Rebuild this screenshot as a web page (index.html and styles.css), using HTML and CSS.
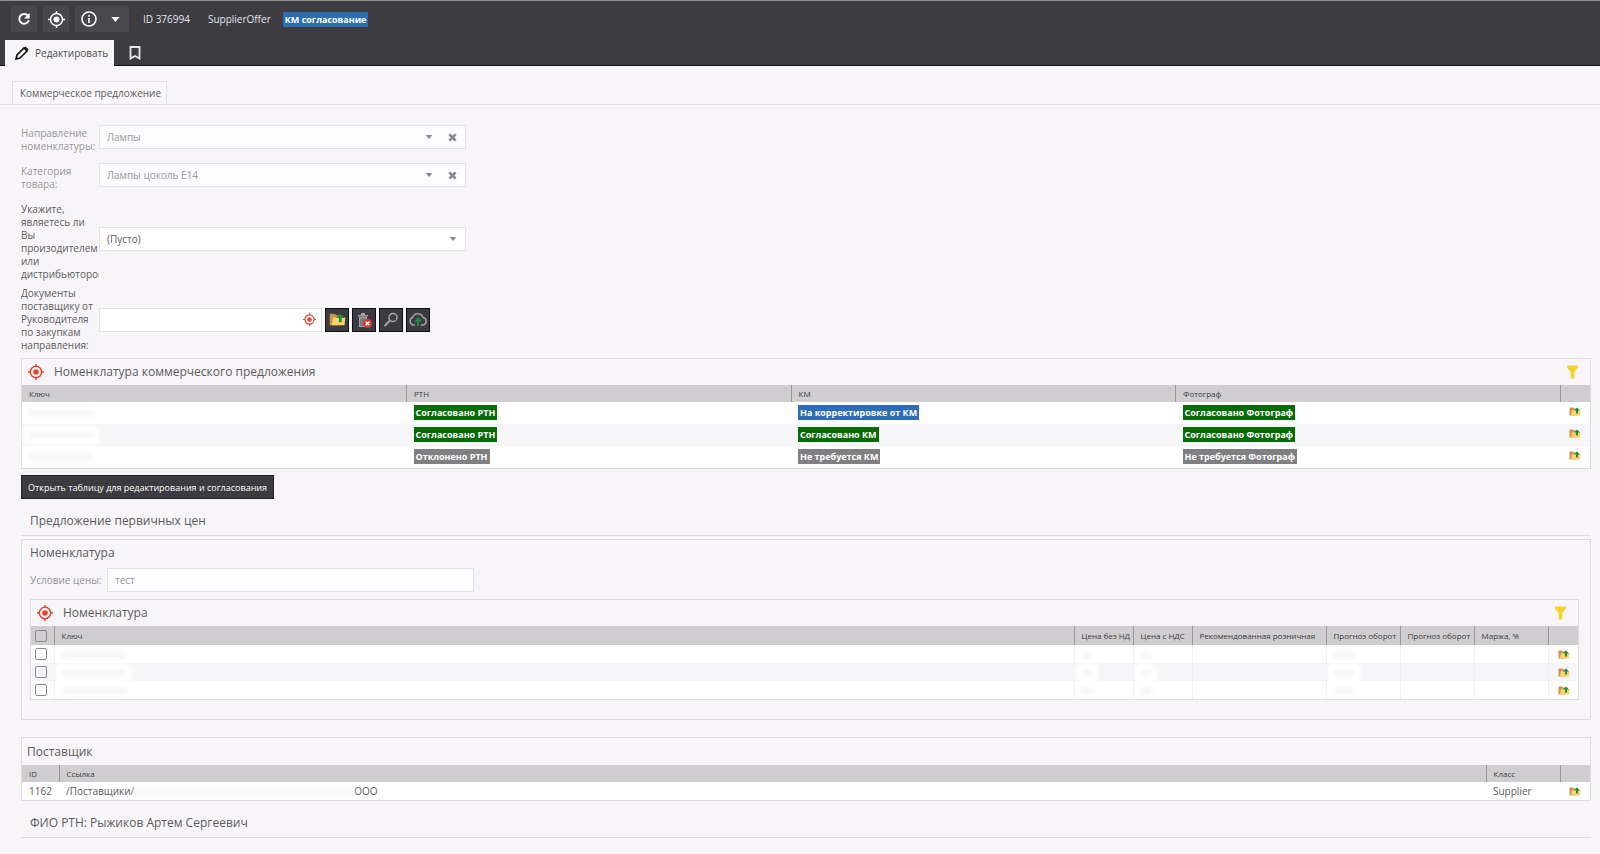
FILE: index.html
```html
<!DOCTYPE html>
<html lang="ru">
<head>
  <meta charset="UTF-8" />
  <meta name="viewport" content="width=device-width, initial-scale=1" />
  <title>SupplierOffer 376994</title>
  <link rel="stylesheet" href="styles.css">
</head>
<body>

  <!-- shared icons -->
  <svg class="sprite" aria-hidden="true">
    <symbol id="i-target" viewBox="0 0 24 24">
      <circle cx="12" cy="12" r="8.500" fill="none" stroke="currentColor" stroke-width="2.200" />
      <circle cx="12" cy="12" r="4.200" fill="currentColor" />
      <path d="M12 0v4M12 20v4M0 12h4M20 12h4" stroke="currentColor" stroke-width="2.200" />
    </symbol>
    <symbol id="i-caret" viewBox="0 0 10 6"><path d="M0 0h10L5 6z" fill="currentColor" /></symbol>
    <symbol id="i-cross" viewBox="0 0 10 10"><path d="M1.500 1.500l7 7M8.500 1.500l-7 7" stroke="currentColor" stroke-width="3" /></symbol>
    <symbol id="i-folder" viewBox="0 0 24 18">
      <path d="M1 17V2l1-1h6l2 2h6v14z" fill="#c9954f" />
      <path d="M4 17L6 6h17l-1 11z" fill="#fbd467" />
      <path d="M16 1l6 6h-4v6h-4V7h-4z" fill="#1f8a45" />
    </symbol>
    <symbol id="i-filter" viewBox="0 0 12 14"><path d="M0 0h12v2L8 7v7H4V7L0 2z" fill="#f5d327" /></symbol>
  </svg>

  <header class="top">
    <div class="toolbar">
      <button class="tool" type="button" aria-label="Обновить">
        <svg width="14" height="14" viewBox="0 0 16 16"><path d="M12.500 4.200A5.600 5.600 0 1 0 13.500 9.600" fill="none" stroke="#fff" stroke-width="2.200" /><path d="M14.500 1v6.500H8z" fill="#fff" /></svg>
      </button>
      <button class="tool" type="button" aria-label="Показать в дереве">
        <svg width="17" height="17"><use href="#i-target" /></svg>
      </button>
      <div class="tool-group">
        <button class="tool" type="button" aria-label="Информация">
          <svg width="16" height="16" viewBox="0 0 16 16"><circle cx="8" cy="8" r="7" fill="none" stroke="#fff" stroke-width="1.600" /><path d="M8 7v5M8 4v1.800" stroke="#fff" stroke-width="1.600" /></svg>
        </button>
        <button class="tool" type="button" aria-label="Ещё">
          <svg width="9" height="5"><use href="#i-caret" /></svg>
        </button>
      </div>
      <span class="info">ID 376994</span>
      <span class="info">SupplierOffer</span>
      <span class="badge blue">КМ согласование</span>
    </div>
    <nav class="tabs">
      <button class="tab active" type="button">
        <svg width="14" height="14" viewBox="0 0 14 14"><path d="M1 13l1-4 7-7 3 3-7 7z" fill="none" stroke="#111" stroke-width="1.600" /><path d="M9 2l1.500-1.500 3 3L12 5z" fill="#111" /></svg>
        Редактировать
      </button>
      <button class="tab" type="button" aria-label="Закладка">
        <svg width="12" height="14" viewBox="0 0 12 14"><path d="M1.500 1h9v11.500L6 10l-4.500 2.500z" fill="none" stroke="#e8e8ea" stroke-width="1.800" /></svg>
      </button>
    </nav>
  </header>

  <div class="subtabs">
    <button class="subtab" type="button">Коммерческое предложение</button>
  </div>

  <main class="content">
    <div class="field muted">
      <label for="direction">Направление номенклатуры:</label>
      <div class="control">
        <select id="direction" disabled><option>Лампы</option></select>
        <svg width="8" height="4"><use href="#i-caret" /></svg>
        <svg width="9" height="9"><use href="#i-cross" /></svg>
      </div>
    </div>
    <div class="field muted">
      <label for="category">Категория товара:</label>
      <div class="control">
        <select id="category" disabled><option>Лампы цоколь Е14</option></select>
        <svg width="8" height="4"><use href="#i-caret" /></svg>
        <svg width="9" height="9"><use href="#i-cross" /></svg>
      </div>
    </div>
    <div class="field">
      <label for="maker">Укажите, являетесь ли Вы произодителем или дистрибьютором</label>
      <div class="control">
        <select id="maker"><option>(Пусто)</option></select>
        <svg width="8" height="4"><use href="#i-caret" /></svg>
      </div>
    </div>
    <div class="field docs">
      <label for="docs">Документы поставщику от Руководителя по закупкам направления:</label>
      <div class="control">
        <input id="docs" type="text">
        <svg class="red" width="13" height="13"><use href="#i-target" /></svg>
      </div>
      <button class="icon-btn" type="button" aria-label="Открыть"><svg width="17" height="13"><use href="#i-folder" /></svg></button>
      <button class="icon-btn" type="button" aria-label="Удалить">
        <svg width="16" height="16" viewBox="0 0 16 16"><path d="M2 3h10v1.500H2zM5 1h4v2H5zM3 5h8v10H3z" fill="#a3a3a5" /><path d="M5 6v8M7 6v8M9 6v8" stroke="#55555a" /><circle cx="11.500" cy="11.500" r="4.500" fill="#e2352b" /><path d="M9.700 9.700l3.600 3.600M13.300 9.700l-3.600 3.600" stroke="#fff" stroke-width="1.400" /></svg>
      </button>
      <button class="icon-btn" type="button" aria-label="Найти">
        <svg width="16" height="16" viewBox="0 0 16 16"><circle cx="10" cy="5.500" r="4" fill="none" stroke="#a8a8aa" stroke-width="1.400" /><path d="M7 8.500L1.500 14" stroke="#a8a8aa" stroke-width="1.800" /></svg>
      </button>
      <button class="icon-btn" type="button" aria-label="Загрузить">
        <svg width="20" height="16" viewBox="0 0 20 16"><path d="M7 13H5a4 4 0 0 1-.5-7.500A5.500 5.500 0 0 1 15 5.500 3.800 3.800 0 0 1 15 13h-2" fill="none" stroke="#a0a0a3" stroke-width="1.500" /><path d="M10 5l4 4.500h-3V14H9V9.500H6z" fill="#1f8a45" /></svg>
      </button>
    </div>

    <section class="panel">
      <div class="panel-head">
        <svg class="red" width="16" height="16"><use href="#i-target" /></svg>
        <h2>Номенклатура коммерческого предложения</h2>
        <svg class="filter" width="11" height="14"><use href="#i-filter" /></svg>
      </div>
      <table class="offers">
        <colgroup><col><col><col><col><col class="c-open"></colgroup>
        <thead>
          <tr><th>Ключ</th><th>РТН</th><th>КМ</th><th>Фотограф</th><th></th></tr>
        </thead>
        <tbody>
          <tr>
            <td><span class="smudge"></span></td>
            <td><span class="badge green">Согласовано РТН</span></td>
            <td><span class="badge blue">На корректировке от КМ</span></td>
            <td><span class="badge green">Согласовано Фотограф</span></td>
            <td class="open"><svg width="12" height="9"><use href="#i-folder" /></svg></td>
          </tr>
          <tr>
            <td><span class="smudge patch"></span></td>
            <td><span class="badge green">Согласовано РТН</span></td>
            <td><span class="badge green">Согласовано КМ</span></td>
            <td><span class="badge green">Согласовано Фотограф</span></td>
            <td class="open"><svg width="12" height="9"><use href="#i-folder" /></svg></td>
          </tr>
          <tr>
            <td><span class="smudge"></span></td>
            <td><span class="badge gray">Отклонено РТН</span></td>
            <td><span class="badge gray">Не требуется КМ</span></td>
            <td><span class="badge gray">Не требуется Фотограф</span></td>
            <td class="open"><svg width="12" height="9"><use href="#i-folder" /></svg></td>
          </tr>
        </tbody>
      </table>
    </section>

    <button class="dark-btn" type="button">Открыть таблицу для редактирования и согласования</button>

    <h2 class="line-title">Предложение первичных цен</h2>

    <section class="box">
      <h2>Номенклатура</h2>
      <div class="field muted price">
        <label for="price">Условие цены:</label>
        <div class="control"><input id="price" type="text" value="тест" disabled></div>
      </div>
      <div class="panel">
        <div class="panel-head">
          <svg class="red" width="16" height="16"><use href="#i-target" /></svg>
          <h2>Номенклатура</h2>
          <svg class="filter" width="11" height="14"><use href="#i-filter" /></svg>
        </div>
        <table class="prices">
          <colgroup>
            <col class="c-check"><col><col class="c-net"><col class="c-vat"><col class="c-retail">
            <col class="c-plan"><col class="c-plan"><col class="c-plan"><col class="c-open">
          </colgroup>
          <thead>
            <tr>
              <th><input type="checkbox" aria-label="Выбрать все"></th><th>Ключ</th><th>Цена без НД</th><th>Цена с НДС</th>
              <th>Рекомендованная розничная</th><th>Прогноз оборот</th><th>Прогноз оборот</th><th>Маржа, %</th><th></th>
            </tr>
          </thead>
          <tbody>
            <tr>
              <td><input type="checkbox" aria-label="Строка 1"></td><td><span class="smudge"></span></td>
              <td><span class="smudge tiny"></span></td><td><span class="smudge tiny"></span></td><td></td>
              <td><span class="smudge small"></span></td><td></td><td></td>
              <td class="open"><svg width="12" height="9"><use href="#i-folder" /></svg></td>
            </tr>
            <tr>
              <td><input type="checkbox" aria-label="Строка 2"></td><td><span class="smudge patch"></span></td>
              <td><span class="smudge tiny patch"></span></td><td><span class="smudge tiny patch"></span></td><td></td>
              <td><span class="smudge small patch"></span></td><td></td><td></td>
              <td class="open"><svg width="12" height="9"><use href="#i-folder" /></svg></td>
            </tr>
            <tr>
              <td><input type="checkbox" aria-label="Строка 3"></td><td><span class="smudge"></span></td>
              <td><span class="smudge tiny"></span></td><td><span class="smudge tiny"></span></td><td></td>
              <td><span class="smudge small"></span></td><td></td><td></td>
              <td class="open"><svg width="12" height="9"><use href="#i-folder" /></svg></td>
            </tr>
          </tbody>
        </table>
      </div>
    </section>

    <section class="panel supplier">
      <div class="panel-head"><h2>Поставщик</h2></div>
      <table>
        <colgroup><col class="c-id"><col><col class="c-class"><col class="c-open"></colgroup>
        <thead>
          <tr><th>ID</th><th>Ссылка</th><th>Класс</th><th></th></tr>
        </thead>
        <tbody>
          <tr>
            <td>1162</td>
            <td>/Поставщики/<span class="smudge long"></span>ООО</td>
            <td>Supplier</td>
            <td class="open"><svg width="12" height="9"><use href="#i-folder" /></svg></td>
          </tr>
        </tbody>
      </table>
    </section>

    <h2 class="line-title">ФИО РТН: Рыжиков Артем Сергеевич</h2>
  </main>

</body>
</html>
```

FILE: styles.css
```css
* {
  box-sizing: border-box;
}

body {
  margin: 0;
  font-family: "Open Sans", "Noto Sans", sans-serif;
  font-size: 10px;
  line-height: 13px;
  color: #5c5a5e;
  background: #f7f5f8;
}

button, input, select {
  font: inherit;
  color: inherit;
  margin: 0;
}

svg {
  display: block;
  flex: none;
}

h2 {
  margin: 0;
  font-size: 12px;
  line-height: 16px;
  font-weight: 400;
}

.sprite {
  position: absolute;
  width: 0;
  height: 0;
}

/* header */
.top {
  height: 66px;
  background: #3c3c41;
  border-top: 1px solid #8a8f92;
  border-bottom: 1px solid #111;
  color: #e4e4e6;
}

.toolbar {
  display: flex;
  align-items: center;
  gap: 6px;
  padding: 5px 11px 0;
}

.tool {
  display: flex;
  align-items: center;
  justify-content: center;
  width: 26px;
  height: 26px;
  padding: 0;
  border: 0;
  background: #48484c;
  color: #fff;
}

.tool-group {
  display: flex;
}

.tool-group .tool {
  width: 27px;
}

.info {
  margin-left: 8px;
}

.info + .info {
  margin-left: 12px;
}

.info + .badge {
  margin-left: 6px;
}

.tabs {
  display: flex;
  gap: 10px;
  padding: 8px 5px 0;
}

.tab {
  display: flex;
  align-items: center;
  gap: 6px;
  height: 26px;
  padding: 0 5px;
  border: 0;
  background: none;
}

.tab.active {
  padding: 0 6px 0 10px;
  background: #f7f5f8;
  color: #4d4c50;
}

.subtabs {
  display: flex;
  padding: 15px 12px 0;
  border-bottom: 1px solid #e2e0e3;
}

.subtab {
  height: 23px;
  padding: 0 5px 0 7px;
  border: 1px solid #e2e0e3;
  border-bottom: 0;
  background: #f9f7fa;
}

.content {
  display: flex;
  flex-direction: column;
  padding: 16px 9px 0 21px;
}

/* form rows */
.field {
  display: flex;
  align-items: center;
  margin-bottom: 6px;
}

.field label {
  width: 78px;
  padding: 6px 3px 0 0;
  overflow: hidden;
}

.muted {
  color: #98969a;
}

.control {
  display: flex;
  align-items: center;
  gap: 15px;
  width: 367px;
  height: 24px;
  padding-right: 8px;
  border: 1px solid #e3e1e4;
  background: #fff;
}

.muted .control {
  background: #fdfcfe;
}

.control select, .control input {
  flex: 1;
  min-width: 0;
  height: 22px;
  padding: 0 7px;
  border: 0;
  background: none;
  appearance: none;
  opacity: 1;
}

.control svg {
  color: #8b898d;
}

.docs label {
  padding-top: 0;
}

.docs .control {
  width: 223px;
  padding-right: 5px;
}

.control .red, .red {
  color: #e2452f;
}

.icon-btn {
  display: flex;
  align-items: center;
  justify-content: center;
  width: 24px;
  height: 24px;
  margin-left: 3px;
  padding: 0;
  border: 1px solid #111;
  background: #3c3c40;
}

/* panels and tables */
.panel {
  border: 1px solid #dddbde;
}

.panel-head {
  display: flex;
  align-items: center;
  gap: 10px;
  height: 26px;
  padding: 0 12px 0 6px;
}

.panel-head h2 {
  padding-left: 0;
}

.filter {
  margin-left: auto;
}

table {
  width: 100%;
  border-collapse: collapse;
  table-layout: fixed;
}

th {
  height: 17px;
  padding: 0 0 0 7px;
  border-left: 1px solid #98969a;
  background: #cfcdd0;
  color: #3c3b3e;
  font-size: 8px;
  font-weight: 400;
  text-align: left;
  white-space: nowrap;
  overflow: hidden;
}

th:first-child {
  border-left: 0;
}

td {
  height: 18px;
  padding: 0 0 0 7px;
  background: #fff;
  white-space: nowrap;
}

tr:nth-child(even) td {
  background: #f6f5f7;
}

.offers td {
  height: 22px;
  padding-bottom: 2px;
}

.c-open {
  width: 30px;
}

.open svg {
  margin-left: 2px;
}

.offers .open {
  padding-bottom: 4px;
}

.badge {
  display: inline-block;
  height: 15px;
  padding: 0 2px;
  line-height: 15px;
  font-size: 9px;
  font-weight: 700;
  color: #fff;
  vertical-align: middle;
}

.green {
  background: #076b07;
}

.blue {
  background: #2f6db3;
}

.gray {
  background: #808082;
}

/* hidden values */
.smudge {
  display: inline-block;
  width: 64px;
  height: 6px;
  background: #f5f4f6;
  filter: blur(2px);
  vertical-align: middle;
}

.smudge.small {
  width: 20px;
}

.smudge.tiny {
  width: 10px;
}

.smudge.long {
  width: 220px;
}

.smudge.patch {
  box-shadow: 0 0 0 6px #fff;
}

.dark-btn {
  align-self: flex-start;
  height: 24px;
  margin-top: 6px;
  padding: 0 6px;
  border: 1px solid #222;
  background: #3c3c40;
  color: #fff;
  font-size: 9px;
}

.line-title {
  padding: 14px 9px 6px;
  border-bottom: 1px solid #dddbde;
}

.box {
  margin: 3px 0 17px;
  padding: 5px 11px 19px 8px;
  border: 1px solid #dddbde;
}

.price {
  margin: 7px 0;
}

.price label {
  width: 77px;
  padding-top: 0;
}

.prices th {
  height: 19px;
}

.prices input {
  display: block;
  width: 12px;
  height: 12px;
  margin-left: -3px;
  border: 1px solid #8b898d;
  border-radius: 2px;
  background: none;
  appearance: none;
}

.prices td + td {
  border-left: 1px solid #f1eff2;
}

.c-check {
  width: 23px;
}

.c-net {
  width: 59px;
}

.c-vat {
  width: 59px;
}

.c-retail {
  width: 134px;
}

.c-plan {
  width: 74px;
}

.supplier .panel-head {
  height: 27px;
  padding-left: 5px;
}

.c-id {
  width: 37px;
}

.c-class {
  width: 74px;
}
```
